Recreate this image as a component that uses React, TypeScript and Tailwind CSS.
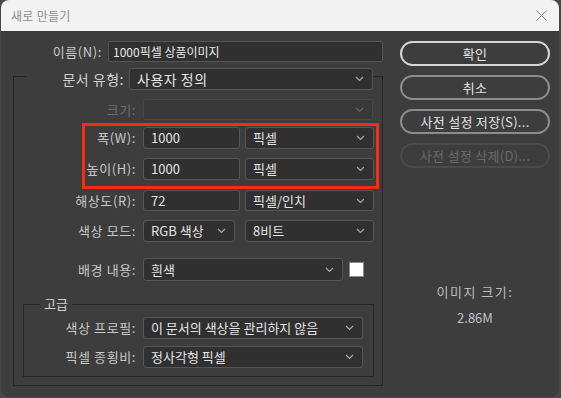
import React from "react";

const Chevron = () => (
  <svg width="9" height="6" viewBox="0 0 9 6" className="shrink-0">
    <path d="M1 1l3.5 3.5L8 1" fill="none" stroke="#a8a8a8" strokeWidth="1.2" />
  </svg>
);

type BoxProps = {
  value?: string;
  width: string;
  select?: boolean;
  disabled?: boolean;
  big?: boolean;
};

const Box = ({ value, width, select, disabled, big }: BoxProps) => (
  <div
    className={`${width} h-full flex items-center justify-between rounded-[3px] border pl-[7px] pr-[8px] ${
      disabled ? "border-[#474747] bg-[#383838]" : "border-[#555555] bg-[#303030]"
    }`}
  >
    <span className={`${big ? "text-[14px] tracking-[0.5px]" : "text-[13px]"} text-[#e4e4e4] whitespace-nowrap`}>{value}</span>
    {select && (disabled ? <span className="opacity-40"><Chevron /></span> : <Chevron />)}
  </div>
);

const Label = ({ text, width, disabled }: { text: string; width: string; disabled?: boolean }) => (
  <div
    className={`${width} shrink-0 text-right pr-[7px] text-[13px] tracking-[0.6px] ${
      disabled ? "text-[#6c6c6c]" : "text-[#c8c8c8]"
    }`}
  >
    {text}
  </div>
);

const Button = ({ text, primary, disabled }: { text: string; primary?: boolean; disabled?: boolean }) => (
  <div
    className={`h-[25px] rounded-full flex items-center justify-center text-[13px] tracking-[0.3px] ${
      primary
        ? "border-2 border-[#d6d6d6] text-[#e8e8e8]"
        : disabled
        ? "border-2 border-[#4a4a4a] text-[#6a6a6a]"
        : "border-2 border-[#8c8c8c] text-[#e2e2e2]"
    }`}
  >
    {text}
  </div>
);

export default function App() {
  return (
    <div className="w-[561px] h-[398px] bg-[#474747] font-['Noto_Sans_CJK_KR','Noto_Sans',sans-serif]">
      <div className="w-[558px] h-[397px] ml-[1px] rounded-[8px] overflow-hidden bg-[#3d3d3d] flex flex-col">
        {/* title bar */}
        <div className="h-[31px] bg-[#f3f3f3] flex items-center justify-between pl-[10px] pr-[12px]">
          <span className="text-[12px] tracking-[0.3px] text-[#8e8e8e]">새로 만들기</span>
          <svg width="11" height="11" viewBox="0 0 11 11">
            <path d="M0.5 0.5l10 10M10.5 0.5l-10 10" stroke="#8a8a8a" strokeWidth="1" />
          </svg>
        </div>

        <div className="relative flex flex-1">
          {/* left column */}
          <div className="w-[390px] pt-[10px]">
            <div className="flex items-center h-[21px]">
              <div className="w-[101px] text-right text-[13px] tracking-[0.6px] text-[#c8c8c8]">이름(N):</div>
              <div className="ml-[6px] w-[275px] h-full flex items-center rounded-[2px] border border-[#555555] bg-[#303030] pl-[4px]">
                <span className="text-[12px] text-[#e8e8e8]">1000픽셀 상품이미지</span>
              </div>
            </div>

            <div className="mt-[14px] ml-[12px] w-[370px] h-[310px] border border-[#262626] flex flex-col">
              <div className="-mt-[9px] h-[22px] ml-[13px] w-[346px] bg-[#3d3d3d] flex items-center">
                <div className="flex-1 text-right pr-[5px] text-[14px] tracking-[0.5px] text-[#d0d0d0]">문서 유형:</div>
                <Box width="w-[244px]" value="사용자 정의" select big />
              </div>

              <div className="mt-[9px] h-[21px] flex items-center">
                <Label text="크기:" width="w-[129px]" disabled />
                <Box width="w-[230px]" select disabled />
              </div>

              <div className="mt-[7px] h-[22px] flex items-center">
                <Label text="폭(W):" width="w-[129px]" />
                <Box width="w-[97px]" value="1000" />
                <div className="ml-[5px] h-full flex"><Box width="w-[129px]" value="픽셀" select /></div>
              </div>

              <div className="mt-[9px] h-[22px] flex items-center">
                <Label text="높이(H):" width="w-[129px]" />
                <Box width="w-[97px]" value="1000" />
                <div className="ml-[5px] h-full flex"><Box width="w-[129px]" value="픽셀" select /></div>
              </div>

              <div className="mt-[10px] h-[21px] flex items-center">
                <Label text="해상도(R):" width="w-[129px]" />
                <Box width="w-[97px]" value="72" />
                <div className="ml-[5px] h-full flex"><Box width="w-[129px]" value="픽셀/인치" select /></div>
              </div>

              <div className="mt-[9px] h-[22px] flex items-center">
                <Label text="색상 모드:" width="w-[129px]" />
                <Box width="w-[92px]" value="RGB 색상" select />
                <div className="ml-[10px] h-full flex"><Box width="w-[129px]" value="8비트" select /></div>
              </div>

              <div className="mt-[16px] h-[23px] flex items-center">
                <Label text="배경 내용:" width="w-[129px]" />
                <Box width="w-[200px]" value="흰색" select />
                <div className="ml-[6px] w-[15px] h-[15px] bg-white border border-[#8a8a8a]" />
              </div>

              {/* advanced group */}
              <div className="mt-[23px] ml-[9px] w-[351px] h-[73px] border border-[#262626] flex flex-col">
                <div className="-mt-[10px] ml-[16px] h-[18px] self-start px-[4px] bg-[#3d3d3d] text-[13px] leading-[18px] text-[#d0d0d0]">
                  고급
                </div>
                <div className="mt-[4px] h-[22px] flex items-center">
                  <Label text="색상 프로필:" width="w-[119px]" />
                  <Box width="w-[220px]" value="이 문서의 색상을 관리하지 않음" select />
                </div>
                <div className="mt-[7px] h-[22px] flex items-center">
                  <Label text="픽셀 종횡비:" width="w-[119px]" />
                  <Box width="w-[220px]" value="정사각형 픽셀" select />
                </div>
              </div>
            </div>
          </div>

          {/* right column */}
          <div className="ml-[9px] w-[150px] pt-[10px] flex flex-col">
            <div className="flex flex-col gap-[9px]">
              <Button text="확인" primary />
              <Button text="취소" />
              <Button text="사전 설정 저장(S)..." />
              <Button text="사전 설정 삭제(D)..." disabled />
            </div>
            <div className="mt-[114px] flex flex-col items-center gap-[6px]">
              <span className="text-[13px] tracking-[1.5px] text-[#bcbcbc]">이미지 크기:</span>
              <span className="text-[13px] text-[#bcc4d0]">2.86M</span>
            </div>
          </div>

          {/* red annotation overlay */}
          <div className="absolute left-[81px] top-[92px] w-[297px] h-[66px] border-[3px] border-[#fb2a12]" />
        </div>
      </div>
    </div>
  );
}
